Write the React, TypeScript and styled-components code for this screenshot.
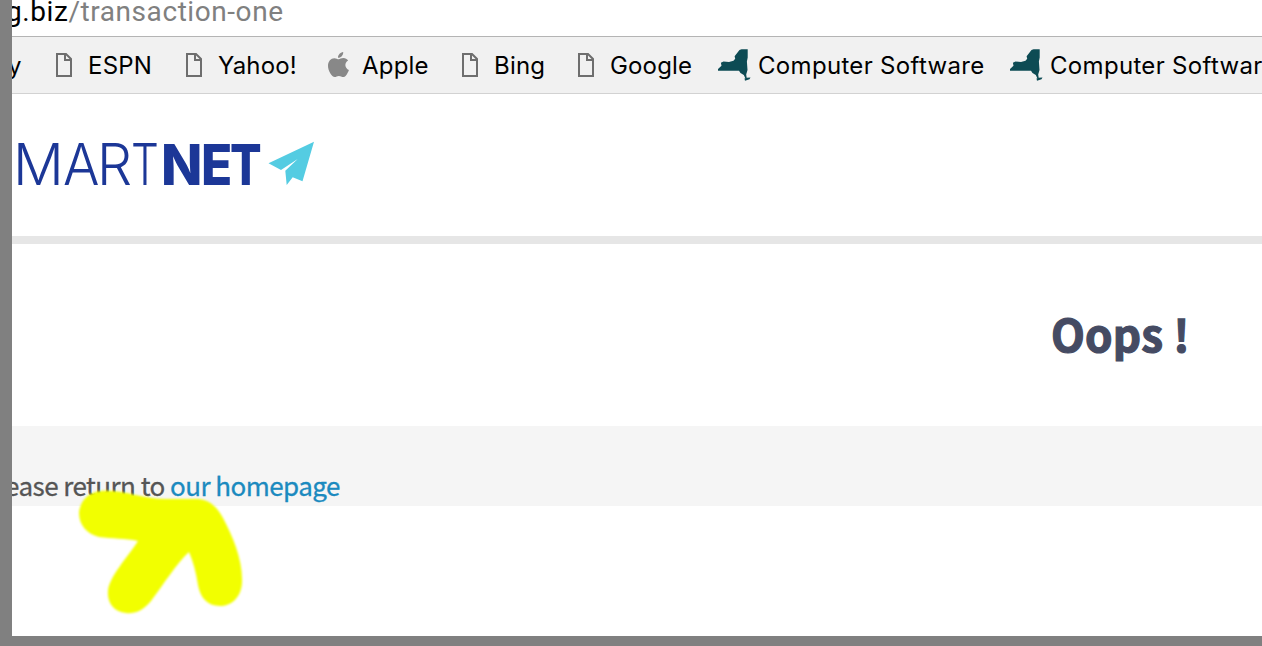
import React from 'react';
import styled, { createGlobalStyle } from 'styled-components';

const GlobalStyle = createGlobalStyle`
  * { box-sizing: border-box; }
  body { margin: 0; background: #808080; overflow: hidden; }
`;

const Frame = styled.div`
  width: 1262px;
  height: 646px;
  padding: 0 0 10px 12px;
  background: #808080;
`;

const Screen = styled.div`
  position: relative;
  height: 636px;
  background: #fff;
  overflow: hidden;
  display: flex;
  flex-direction: column;
`;

const AddressBar = styled.div`
  height: 37px;
  flex: none;
  border-bottom: 1px solid #b4b4b4;
  font: 400 28px/34px Roboto, sans-serif;
  letter-spacing: 0.57px;
  white-space: nowrap;
  color: #000;
`;

const Address = styled.div`
  margin: -5px 0 0 -6px;
`;

const UrlPath = styled.span`
  color: #808080;
`;

const BookmarkBar = styled.nav`
  display: flex;
  flex: none;
  height: 57px;
  background: #f1f1f1;
  border-bottom: 1px solid #d2d2d2;
`;

const Bookmark = styled.div<{ $width: number; $spacing?: number }>`
  display: flex;
  flex: none;
  align-items: center;
  width: ${p => p.$width}px;
  height: 56px;
  font: 400 24px/30px Inter, sans-serif;
  letter-spacing: ${p => p.$spacing ?? 0}px;
  white-space: nowrap;
  color: #000;
`;

const Label = styled.span<{ $clipped?: boolean }>`
  padding-top: 2px;
  margin-left: ${p => (p.$clipped ? -4 : 0)}px;
`;

const IconSlot = styled.span<{ $width: number }>`
  display: flex;
  flex: none;
  width: ${p => p.$width}px;
`;

const Header = styled.header`
  display: flex;
  flex: none;
  height: 150px;
  border-bottom: 8px solid #e6e6e6;
`;

const Logo = styled.div`
  display: flex;
  height: 142px;
  padding-left: 1px;
  color: #1c3797;
  white-space: nowrap;
`;

const LogoLetter = styled.span<{ $width: number; $bold?: boolean; $stretch: number }>`
  width: ${p => p.$width}px;
  font: ${p => (p.$bold ? 850 : 270)} 57px/141px Inter, sans-serif;
  transform: scaleX(${p => p.$stretch});
  transform-origin: left;
`;

const Plane = styled.svg`
  margin-top: 47px;
`;

const Title = styled.h1`
  flex: none;
  height: 182px;
  margin: 0;
  padding: 0 0 0 1039px;
  font: 700 44px/178px 'Noto Sans CJK SC', sans-serif;
  letter-spacing: 0.2px;
  -webkit-text-stroke: 1.2px #454b63;
  color: #454b63;
  white-space: nowrap;
`;

const Message = styled.p`
  flex: none;
  height: 80px;
  margin: 0;
  padding-top: 39px;
  background: #f5f5f5;
  font: 400 26px/40px 'Noto Sans CJK SC', sans-serif;
  letter-spacing: -0.55px;
  -webkit-text-stroke: 0.3px;
  color: #555;
  white-space: nowrap;
`;

const MessageText = styled.span`
  display: block;
  margin-left: -7px;
`;

const Link = styled.a`
  color: #1b8abf;
`;

const Marker = styled.svg`
  position: absolute;
  left: 58px;
  top: 480px;
`;

const PageIcon = () => (
  <svg width="18" height="24" viewBox="0 0 18 24" fill="none" stroke="#6e6e6e" strokeWidth="2">
    <path d="M2 1h9l5 5v17H2z" />
    <path d="M10 1v6h6" />
  </svg>
);

const AppleIcon = () => (
  <svg width="22" height="27" viewBox="0 0 22 27" fill="#888">
    <path d="M15.2 0C15.5 3 13 6 10 5.8 9.7 3.1 12.2.5 15.2 0z" />
    <path d="M10.7 7.3c1.2 0 2.5-1.2 4.8-1.2 1.8 0 3.6.9 4.6 2.4-4 2.3-3.4 7.8.8 9.4-1 2.9-3.2 7.2-5.7 7.2-1.7 0-2.3-1.1-4.3-1.1s-2.7 1.1-4.2 1.1C3.8 25.1 0 18.9 0 14.1 0 9 3 6.2 6.2 6.2c2 0 3.3 1.1 4.5 1.1z" />
  </svg>
);

const StateIcon = () => (
  <svg width="33" height="32" viewBox="0 0 33 32" fill="#0d4b54">
    <path d="M21.5 1l2-.8h6.2v8.3l-.8 4 .6 8.5-1.3 4.5.5 3.5h-1.5l-1.400-3-3.300-2-1.500-2.300H0v-1.700l3.500-3.300-.6-3 2.600-1.300 5.500.5 4.500-1.100 1.700-2-.6-2.500z" />
    <path d="M26.500 29.500l2-.8 4-.2-1 1.800-4.500 1.500z" />
  </svg>
);

type Entry = { label: string; kind: 'page' | 'apple' | 'state'; width: number; spacing: number };

const bookmarks: Entry[] = [
  { label: 'ESPN', kind: 'page', width: 130, spacing: 0.2 },
  { label: 'Yahoo!', kind: 'page', width: 143, spacing: 0.15 },
  { label: 'Apple', kind: 'apple', width: 133, spacing: 0.2 },
  { label: 'Bing', kind: 'page', width: 116, spacing: 0.2 },
  { label: 'Google', kind: 'page', width: 141, spacing: 0.15 },
  { label: 'Computer Software', kind: 'state', width: 292, spacing: 0.32 },
  { label: 'Computer Software', kind: 'state', width: 292, spacing: 0.32 },
];

const icons = { page: PageIcon, apple: AppleIcon, state: StateIcon };
const slotWidth = { page: 33, apple: 34, state: 40 };

const logoLetters = [
  { char: 'M', width: 50, stretch: 0.99 },
  { char: 'A', width: 34, stretch: 0.95 },
  { char: 'R', width: 34, stretch: 0.97 },
  { char: 'T', width: 30, stretch: 0.77 },
  { char: 'N', width: 40, stretch: 0.95, bold: true },
  { char: 'E', width: 29, stretch: 0.9, bold: true },
  { char: 'T', width: 38, stretch: 0.82, bold: true },
];

export default function App() {
  return (
    <Frame>
      <GlobalStyle />
      <Screen>
        <AddressBar>
          <Address>g.biz<UrlPath>/transaction-one</UrlPath></Address>
        </AddressBar>
        <BookmarkBar>
          <Bookmark $width={43}><Label $clipped>y</Label></Bookmark>
          {bookmarks.map((b, i) => {
            const Icon = icons[b.kind];
            return (
              <Bookmark key={i} $width={b.width} $spacing={b.spacing}>
                <IconSlot $width={slotWidth[b.kind]}><Icon /></IconSlot>
                <Label>{b.label}</Label>
              </Bookmark>
            );
          })}
        </BookmarkBar>
        <Header>
          <Logo>
            {logoLetters.map((l, i) => (
              <LogoLetter key={i} $width={l.width} $bold={l.bold} $stretch={l.stretch}>{l.char}</LogoLetter>
            ))}
          </Logo>
          <Plane width="48" height="46" viewBox="0 0 48 46" fill="#54cce2">
            <path d="M46 .8L34.500 40.200 24.700 36.300 18.700 43.900 17.300 29.700 29.700 18 13 29 .5 22.300z" />
          </Plane>
        </Header>
        <Title>Oops !</Title>
        <Message>
          <MessageText>ease return to <Link>our homepage</Link></MessageText>
        </Message>
        <Marker width="190" height="150" viewBox="70 480 190 150">
          <defs>
            <filter id="soft"><feGaussianBlur stdDeviation="1.1" /></filter>
          </defs>
          <path
            filter="url(#soft)"
            fill="#f2ff00"
            d="M101 491C121 489 144 499 165 499L198 499C210 500 217 507 223 518C233 537 243 560 242 583C241 598 231 606 220 606C207 606 200 597 198 585C196 572 193 561 189 552C177 563 163 585 151 601C143 611 134 614 126 613C114 612 107 603 108 591C109 577 127 558 138 541C125 538 112 539 99 537C87 534 79 525 79 513C80 501 88 492 101 491Z"
          />
        </Marker>
      </Screen>
    </Frame>
  );
}
